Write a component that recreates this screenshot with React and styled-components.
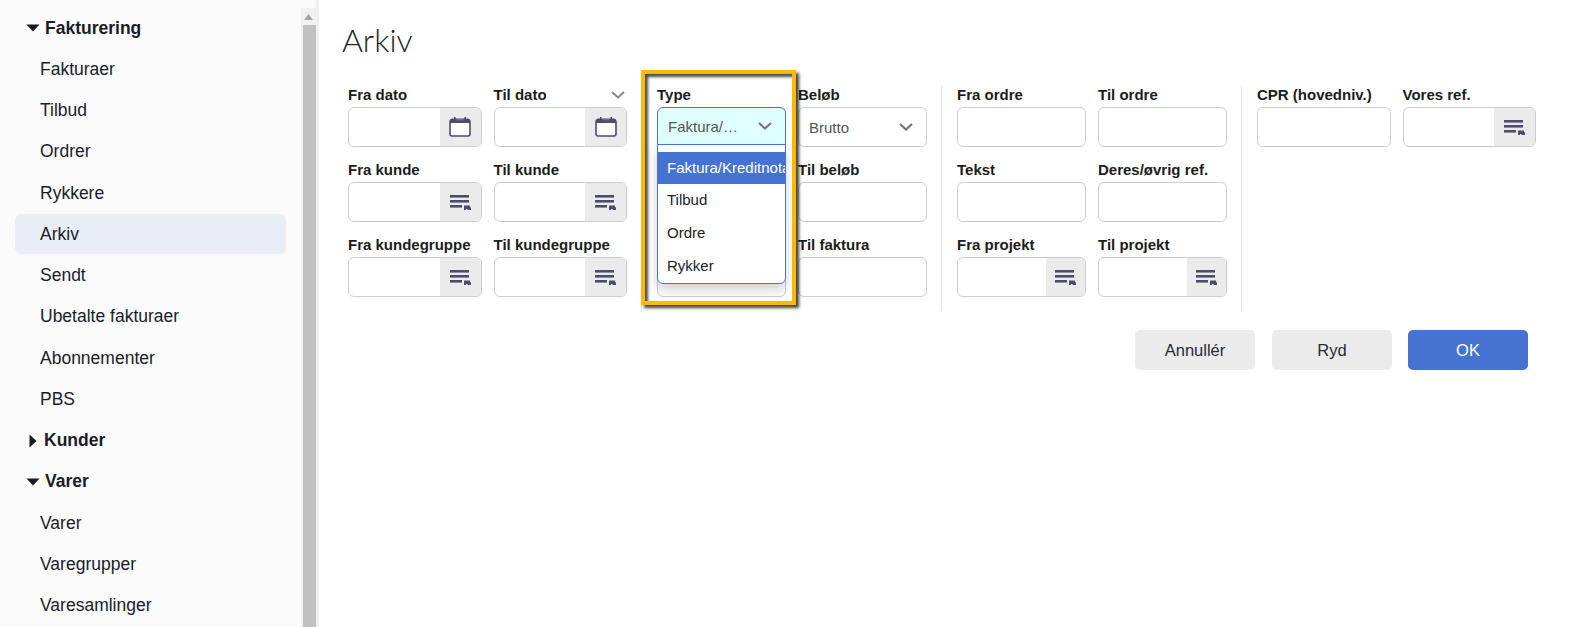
import React from "react";
import styled, { createGlobalStyle } from "styled-components";

const GlobalStyle = createGlobalStyle`
  html, body {
    margin: 0;
    padding: 0;
    height: 100%;
    background: #fff;
    overflow: hidden;
    font-family: "Liberation Sans", Arial, sans-serif;
    color: #1c1c28;
  }
`;

const Page = styled.div`
  display: flex;
  height: 627px;
  overflow: hidden;
`;

const Sidebar = styled.nav`
  position: relative;
  box-sizing: border-box;
  flex: 0 0 319px;
  height: 100%;
  padding: 8px 30px 0 15px;
  background: #fafafa;
  border-right: 3px solid #f0f0f0;
  overflow: hidden;
`;

const MenuRow = styled.div`
  display: flex;
  align-items: center;
  box-sizing: border-box;
  height: 40px;
  margin-bottom: 1.25px;
  padding-left: ${(p) => (p.$header ? "11px" : "25px")};
  border-radius: 6px;
  background: ${(p) => (p.$active ? "#e9eef6" : "transparent")};
  font-size: 17.5px;
  font-weight: ${(p) => (p.$header ? 700 : 400)};
`;

const CaretSlot = styled.span`
  display: flex;
  justify-content: center;
  flex: 0 0 13px;
  margin-right: 5px;
`;

const ScrollTrack = styled.div`
  position: absolute;
  top: 8px;
  right: 0;
  bottom: 0;
  width: 15px;
  background: #f1f1f1;
`;

const ScrollArrow = styled.div`
  display: flex;
  justify-content: center;
  align-items: center;
  height: 17px;
`;

const ScrollThumb = styled.div`
  height: 100%;
  margin-left: 2px;
  background: #c1c1c1;
`;

const Main = styled.main`
  flex: 1;
  min-width: 0;
  padding: 0 0 0 29px;
`;

const Title = styled.h1`
  margin: 0 0 0 -6px;
  height: 86px;
  box-sizing: border-box;
  padding-top: 20px;
  font-family: Lato, "Open Sans", sans-serif;
  font-weight: 300;
  font-size: 32px;
  line-height: 40px;
  color: #222;
`;

const Form = styled.div`
  display: grid;
  grid-template-columns: 293px 300px 300px 295px;
`;

const Group = styled.section`
  position: relative;
  box-sizing: border-box;
  display: grid;
  grid-template-columns: 1fr 1fr;
  grid-auto-rows: 61px;
  column-gap: 12px;
  row-gap: 14px;
  align-content: start;
  padding: 0 ${(p) => (p.$last ? "0" : "14px")} 14px ${(p) => (p.$first ? "0" : "15px")};
  border-left: ${(p) => (p.$first ? "none" : "1px solid #e4e4e4")};
`;

const Field = styled.div`
  position: relative;
  min-width: 0;
`;

const LabelRow = styled.div`
  display: flex;
  justify-content: space-between;
  align-items: center;
  height: 21px;
  padding-right: 2px;
`;

const Label = styled.label`
  padding-bottom: 3px;
  font-size: 15px;
  line-height: 16px;
  font-weight: 700;
  white-space: nowrap;
  color: #1c1c1c;
`;

const LabelChevron = styled.span`
  display: flex;
  margin-bottom: 4px;
`;

const InputBox = styled.div`
  display: flex;
  box-sizing: border-box;
  height: 40px;
  border: 1px solid #cdcdcd;
  border-radius: 6px;
  background: #fff;
  overflow: hidden;
`;

const InputArea = styled.div`
  flex: 1;
  min-width: 0;
`;

const IconButton = styled.div`
  display: flex;
  justify-content: center;
  align-items: center;
  flex: 0 0 31%;
  background: #ebebeb;
`;

const SelectBox = styled.div`
  display: flex;
  align-items: center;
  justify-content: space-between;
  box-sizing: border-box;
  height: ${(p) => (p.$open ? "38px" : "40px")};
  padding: 0 13px 0 10px;
  border: 1px solid ${(p) => (p.$open ? "#4672d2" : "#cdcdcd")};
  border-radius: ${(p) => (p.$open ? "6px 6px 0 0" : "6px")};
  background: ${(p) => (p.$open ? "#e0ffff" : "#fff")};
  font-size: 15px;
  color: #555;
`;

const DropList = styled.ul`
  position: absolute;
  z-index: 2;
  top: 58px;
  left: 0;
  right: 0;
  box-sizing: border-box;
  height: 140px;
  margin: 0;
  padding: 7px 0 0;
  list-style: none;
  background: #fff;
  border: 1px solid #4672d2;
  border-radius: 0 0 6px 6px;
  box-shadow: 0 6px 12px rgba(0, 0, 0, 0.18);
  overflow: hidden;
`;

const DropItem = styled.li`
  box-sizing: border-box;
  height: 33px;
  padding: 0 0 2px 9px;
  font-size: 15px;
  line-height: ${(p) => (p.$selected ? "31px" : "29px")};
  white-space: nowrap;
  background: ${(p) =>
    p.$selected ? "linear-gradient(#4672d2 32px, transparent 32px)" : "transparent"};
  color: ${(p) => (p.$selected ? "#fff" : "#1c1c28")};
`;

const HighlightFrame = styled.div`
  position: absolute;
  z-index: 3;
  top: -16px;
  left: -1px;
  box-sizing: border-box;
  width: 155px;
  height: 235px;
  border: 4px solid #ffb900;
  box-shadow: inset 3px 3px 3px rgba(0, 0, 0, 0.7), 3px 3px 3px rgba(0, 0, 0, 0.75);
  pointer-events: none;
`;

const ButtonRow = styled.div`
  display: flex;
  justify-content: flex-end;
  gap: 16px;
  width: 1180px;
  margin-top: 19px;
`;

const ActionButton = styled.button`
  width: 120px;
  height: 40px;
  border: none;
  border-radius: 5px;
  background: ${(p) => (p.$primary ? "#4672d2" : "#ebebeb")};
  color: ${(p) => (p.$primary ? "#fff" : "#2a2a35")};
  font-family: inherit;
  font-size: 16.5px;
  &:first-child {
    margin-right: 1px;
  }
`;

const CaretDown = () => (
  <svg width="14" height="8" viewBox="0 0 14 8">
    <path d="M0.5 0.5h13L7 7.5z" fill="#1a1a1a" />
  </svg>
);

const CaretRight = () => (
  <svg width="8" height="14" viewBox="0 0 8 14">
    <path d="M0.5 0.5L7.5 7L0.5 13.5z" fill="#1a1a1a" />
  </svg>
);

const Chevron = ({ color = "#777", width = 2.2 }) => (
  <svg width="14" height="8" viewBox="0 0 14 8">
    <path d="M1 1l6 5.5L13 1" fill="none" stroke={color} strokeWidth={width} />
  </svg>
);

const CalendarIcon = () => (
  <svg width="22" height="20" viewBox="0 0 22 20">
    <rect x="1" y="3" width="20" height="16" rx="2" fill="#fff" stroke="#4d4d6b" strokeWidth="1.6" />
    <path d="M1 3.5a2 2 0 0 1 2-2h16a2 2 0 0 1 2 2V6H1z" fill="#4d4d6b" />
    <rect x="5" y="0" width="1.6" height="3" fill="#4d4d6b" />
    <rect x="15.4" y="0" width="1.6" height="3" fill="#4d4d6b" />
    <rect x="7.5" y="2.4" width="7" height="0.8" fill="#8a8a9f" />
  </svg>
);

const ListIcon = () => (
  <svg width="21" height="15" viewBox="0 0 21 15">
    <rect x="0" y="0" width="19" height="2.6" fill="#4d4d6b" />
    <rect x="0" y="5" width="19" height="2.6" fill="#4d4d6b" />
    <rect x="0" y="10" width="12" height="2.6" fill="#4d4d6b" />
    <path d="M14 10.5h6v1.2l1 1V15h-3l-1-1h-1v1h-2z" fill="#4d4d6b" />
  </svg>
);

const menu = [
  { text: "Fakturering", header: "open" },
  { text: "Fakturaer" },
  { text: "Tilbud" },
  { text: "Ordrer" },
  { text: "Rykkere" },
  { text: "Arkiv", active: true },
  { text: "Sendt" },
  { text: "Ubetalte fakturaer" },
  { text: "Abonnementer" },
  { text: "PBS" },
  { text: "Kunder", header: "closed" },
  { text: "Varer", header: "open" },
  { text: "Varer" },
  { text: "Varegrupper" },
  { text: "Varesamlinger" },
];

const TextField = ({ label, icon, chevron }) => (
  <Field>
    <LabelRow>
      <Label>{label}</Label>
      {chevron && (
        <LabelChevron>
          <Chevron color="#888" width={2} />
        </LabelChevron>
      )}
    </LabelRow>
    <InputBox>
      <InputArea />
      {icon === "calendar" && (
        <IconButton>
          <CalendarIcon />
        </IconButton>
      )}
      {icon === "list" && (
        <IconButton>
          <ListIcon />
        </IconButton>
      )}
    </InputBox>
  </Field>
);

const SelectField = ({ label, value, open }) => (
  <Field>
    <LabelRow>
      <Label>{label}</Label>
    </LabelRow>
    <SelectBox $open={open}>
      {value}
      <Chevron />
    </SelectBox>
    {open && (
      <DropList>
        <DropItem $selected>Faktura/Kreditnota</DropItem>
        <DropItem>Tilbud</DropItem>
        <DropItem>Ordre</DropItem>
        <DropItem>Rykker</DropItem>
      </DropList>
    )}
  </Field>
);

export default function App() {
  return (
    <>
      <GlobalStyle />
      <Page>
        <Sidebar>
          {menu.map((item, i) => (
            <MenuRow key={i} $header={!!item.header} $active={item.active}>
              {item.header && (
                <CaretSlot>
                  {item.header === "open" ? <CaretDown /> : <CaretRight />}
                </CaretSlot>
              )}
              {item.text}
            </MenuRow>
          ))}
          <ScrollTrack>
            <ScrollArrow>
              <svg width="9" height="6" viewBox="0 0 9 6">
                <path d="M4.5 0L9 6H0z" fill="#a3a3a3" />
              </svg>
            </ScrollArrow>
            <ScrollThumb />
          </ScrollTrack>
        </Sidebar>
        <Main>
          <Title>Arkiv</Title>
          <Form>
            <Group $first>
              <TextField label="Fra dato" icon="calendar" />
              <TextField label="Til dato" icon="calendar" chevron />
              <TextField label="Fra kunde" icon="list" />
              <TextField label="Til kunde" icon="list" />
              <TextField label="Fra kundegruppe" icon="list" />
              <TextField label="Til kundegruppe" icon="list" />
            </Group>
            <Group>
              <SelectField label="Type" value="Faktura/…" open />
              <SelectField label="Beløb" value="Brutto" />
              <TextField label="" />
              <TextField label="Til beløb" />
              <TextField label="" />
              <TextField label="Til faktura" />
              <HighlightFrame />
            </Group>
            <Group>
              <TextField label="Fra ordre" />
              <TextField label="Til ordre" />
              <TextField label="Tekst" />
              <TextField label="Deres/øvrig ref." />
              <TextField label="Fra projekt" icon="list" />
              <TextField label="Til projekt" icon="list" />
            </Group>
            <Group $last>
              <TextField label="CPR (hovedniv.)" />
              <TextField label="Vores ref." icon="list" />
            </Group>
          </Form>
          <ButtonRow>
            <ActionButton>Annullér</ActionButton>
            <ActionButton>Ryd</ActionButton>
            <ActionButton $primary>OK</ActionButton>
          </ButtonRow>
        </Main>
      </Page>
    </>
  );
}
